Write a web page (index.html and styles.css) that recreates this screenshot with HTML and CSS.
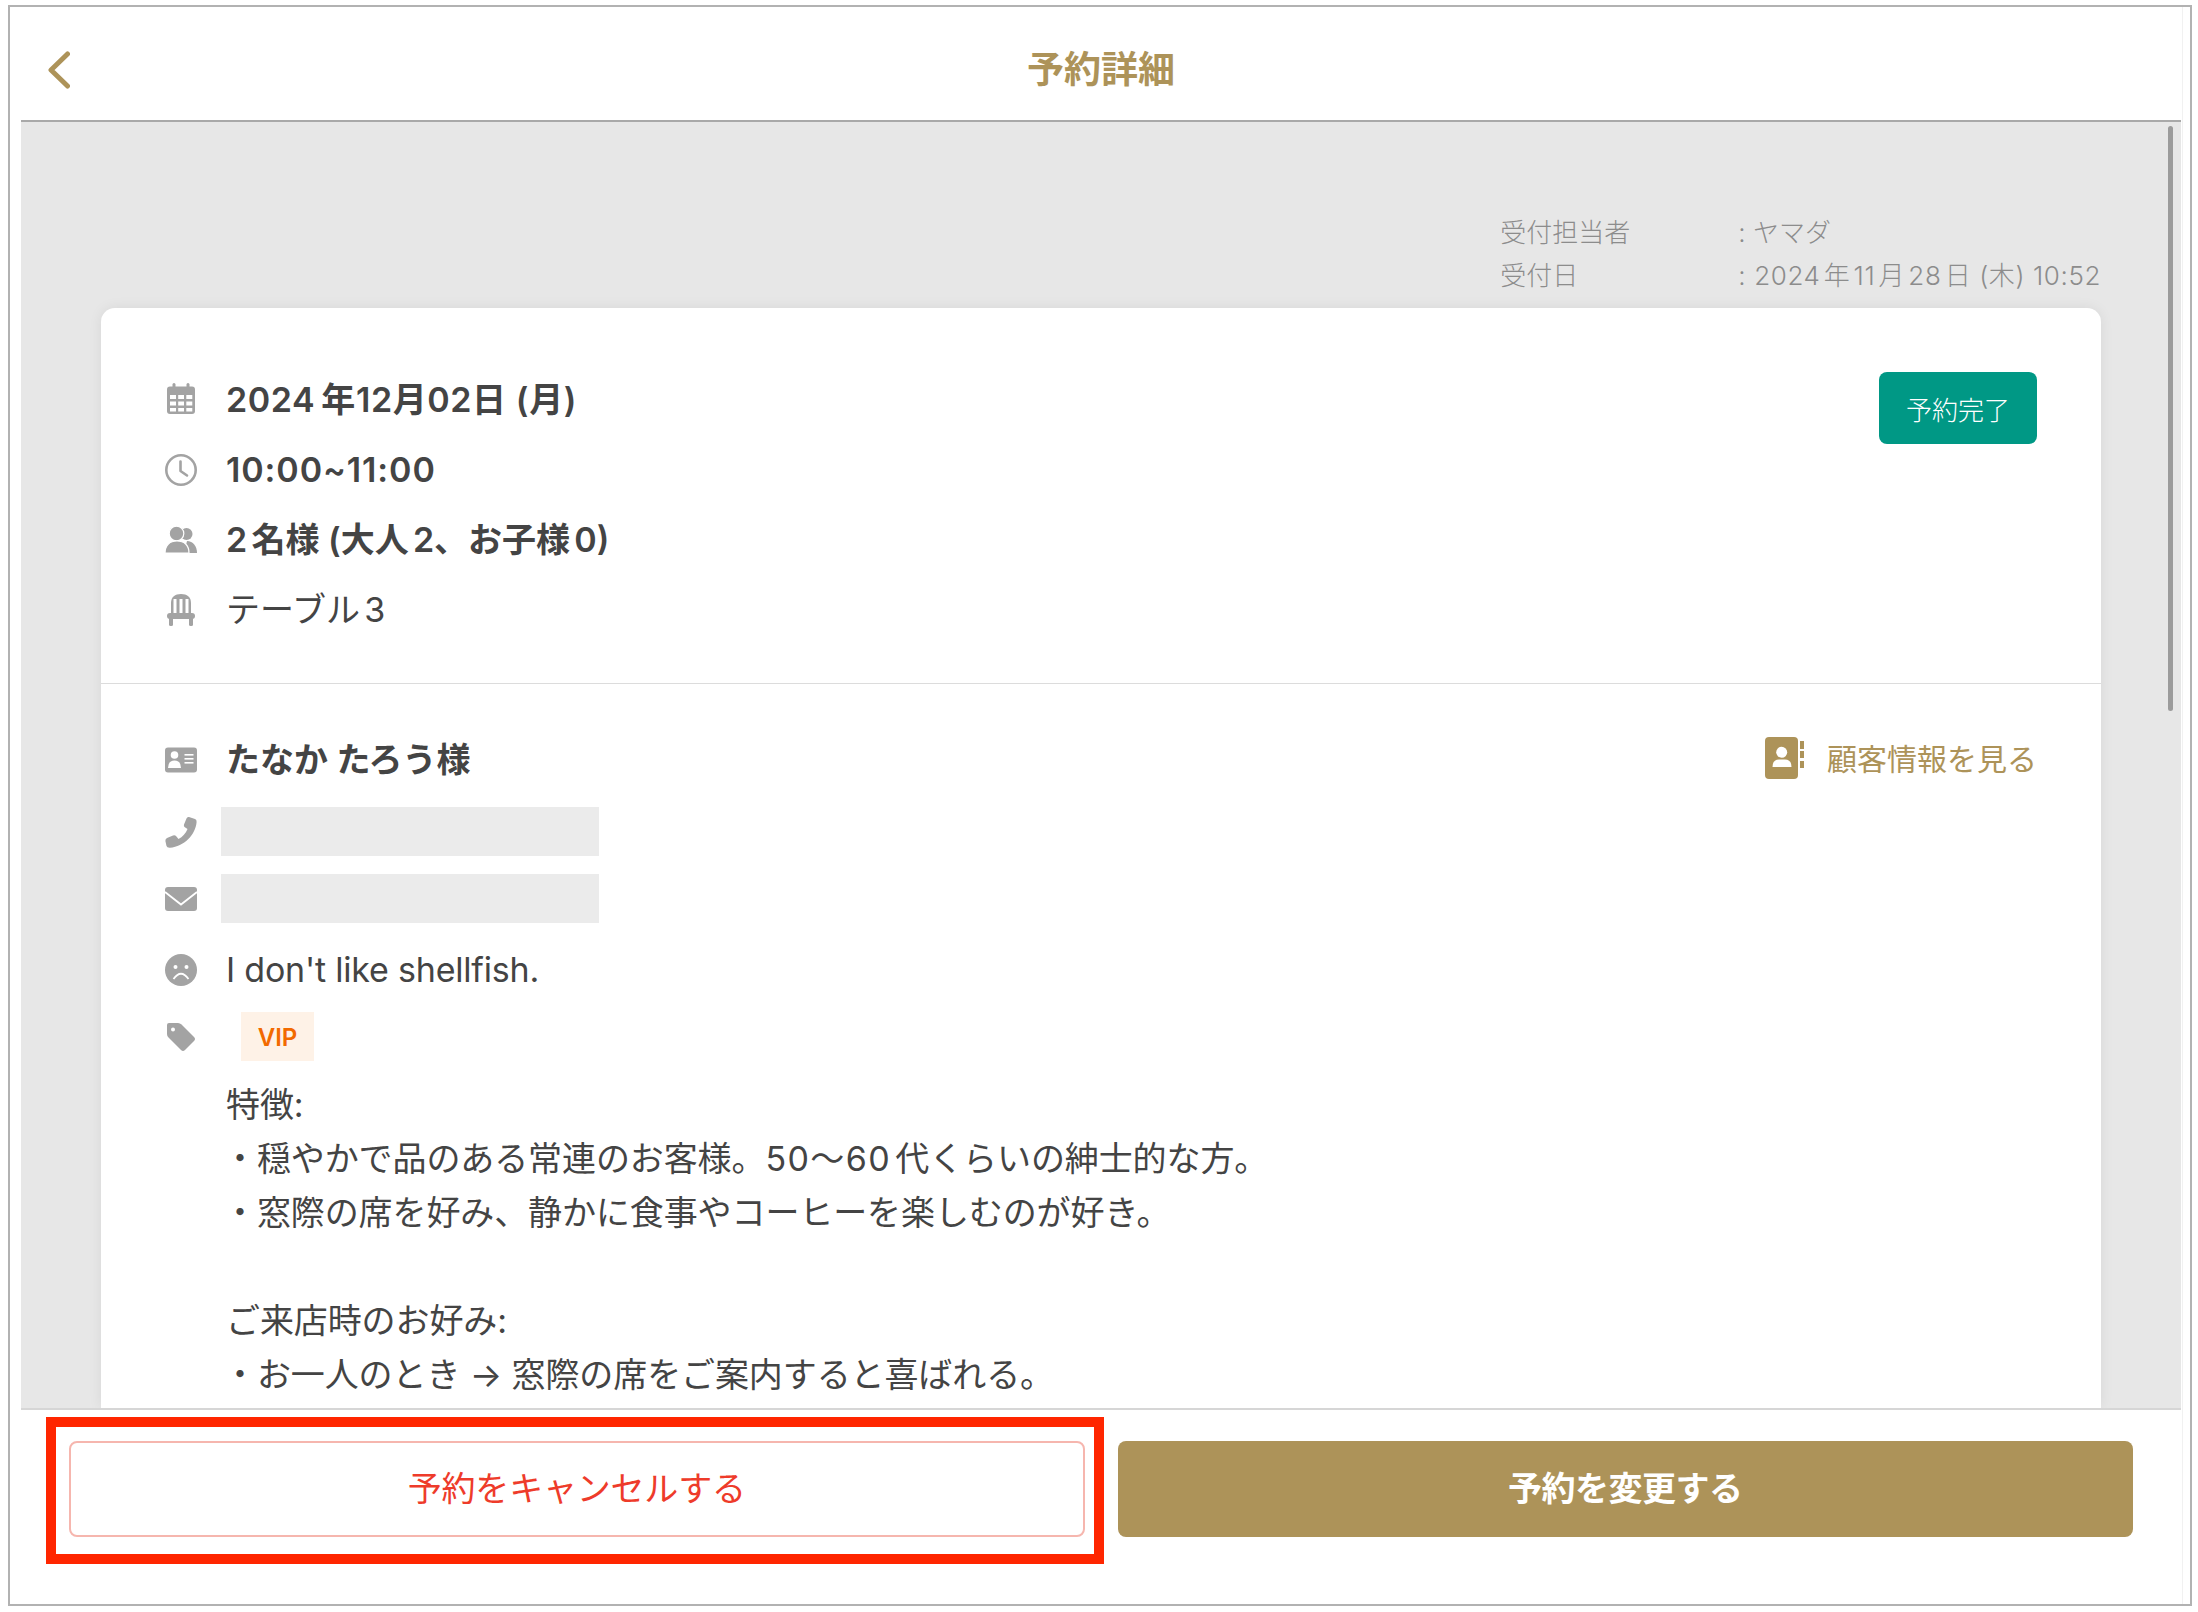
FILE: index.html
```html
<!DOCTYPE html>
<html lang="ja">
<head>
<meta charset="utf-8">
<title>予約詳細</title>
<link rel="stylesheet" href="styles.css">
</head>
<body>
<div class="frame">
  <div class="screen">
    <header class="topbar">
      <div class="topbar-side">
        <svg class="back" viewBox="0 0 22 38"><path d="M19.5 3 L3 19 L19.5 35"/></svg>
      </div>
      <h1 class="title">予約詳細</h1>
      <div class="topbar-side"></div>
    </header>
    <main class="content">
      <div class="scrollbar"></div>
      <dl class="meta">
        <dt>受付担当者</dt><dd>: ヤマダ</dd>
        <dt>受付日</dt><dd class="meta-date">: 2024年11月28日 (木) 10:52</dd>
      </dl>
      <section class="card">
        <div class="summary">
          <div class="rows">
            <div class="row strong">
              <svg class="icon" viewBox="0 0 32 32"><rect x="2" y="2.5" width="28" height="27.5" rx="3"/><rect x="7.5" y="-1" width="3" height="6" rx="1.5"/><rect x="21.5" y="-1" width="3" height="6" rx="1.5"/><g class="cut"><rect x="5" y="11" width="6" height="4"/><rect x="13.2" y="11" width="5.8" height="4"/><rect x="21.3" y="11" width="6" height="4"/><rect x="5" y="17.5" width="6" height="4"/><rect x="13.2" y="17.5" width="5.8" height="4"/><rect x="21.3" y="17.5" width="6" height="4"/><rect x="5" y="24" width="6" height="3.5"/><rect x="13.2" y="24" width="5.8" height="3.5"/><rect x="21.3" y="24" width="6" height="3.5"/></g></svg>
              <span class="date"><span class="year">2024</span>年12月02日 (月)</span>
            </div>
            <div class="row strong">
              <svg class="icon" viewBox="0 0 32 32"><circle class="line" cx="16" cy="16" r="14.7"/><path class="line" d="M15.5 7.5 V17 L22 21.5"/></svg>
              <span class="time">10:00~11:00</span>
            </div>
            <div class="row strong">
              <svg class="icon" viewBox="0 0 32 32"><circle cx="21.5" cy="10" r="6"/><path d="M32 29 C32 22 28 17 22 17 L19 29 Z"/><circle class="gap" cx="11.5" cy="9.5" r="7.3"/><path class="gap" d="M0 29 C0 21 5 17 12 17 C19 17 24 21 24 29 Z"/></svg>
              <span>2名様 (大人2、お子様0)</span>
            </div>
            <div class="row">
              <svg class="icon" viewBox="0 0 32 32"><path d="M6 21 V9 C6 3 10 0 16 0 C22 0 26 3 26 9 V21 Z"/><g class="cut"><rect x="8.5" y="5" width="3" height="16"/><rect x="14.5" y="5" width="3" height="16"/><rect x="20.5" y="5" width="3" height="16"/></g><rect x="2" y="19" width="28" height="6" rx="3"/><rect x="4" y="23" width="4" height="9" rx="1.5"/><rect x="24" y="23" width="4" height="9" rx="1.5"/></svg>
              <span>テーブル3</span>
            </div>
          </div>
          <div class="status">予約完了</div>
        </div>
        <div class="customer">
          <div class="name-row">
            <div class="row strong row-name">
              <svg class="icon" viewBox="0 0 32 32"><rect x="0" y="3.5" width="32" height="25" rx="3"/><g class="cut"><circle cx="9.5" cy="11" r="3.8"/><path d="M3 24 Q3 16.5 9.5 16.5 Q16 16.5 16 24 Z"/><rect x="19.5" y="10" width="9" height="1.6"/><rect x="19.5" y="14" width="9" height="1.6"/><rect x="19.5" y="18" width="9" height="1.6"/></g></svg>
              <span>たなか たろう様</span>
            </div>
            <a class="link">
              <svg class="book" viewBox="0 0 40 42"><rect x="0" y="0" width="33" height="42" rx="4"/><rect x="35" y="4" width="4" height="8"/><rect x="35" y="14" width="4" height="7"/><rect x="35" y="24" width="4" height="7"/><g class="cut"><circle cx="16.7" cy="15.3" r="5.5"/><path d="M7.5 30 Q7.5 22.5 14 22.5 H20 Q26.5 22.5 26.5 30 Z"/></g></svg>
              <span class="link-text">顧客情報を見る</span>
            </a>
          </div>
          <div class="row row-phone">
            <svg class="icon" viewBox="0 0 32 32"><path d="M24 1 L30 3 Q31.8 3.6 31.6 6 C30.5 19 19 30.5 5 31.8 Q2 32 1.5 30 L0.4 25 Q0.2 23 2 22 L8 19.5 Q10 19 11 20 L13.5 23 C17.5 21 21 17 22.5 13 L19.5 11 Q18.5 10 19 8.5 L21.5 2.5 Q22 .6 24 1 Z"/></svg>
            <div class="mask"></div>
          </div>
          <div class="row row-mail">
            <svg class="icon" viewBox="0 0 32 32"><rect x="0" y="4" width="32" height="24" rx="3"/><path class="cut-line" d="M0 9 L16 21.5 L32 9"/></svg>
            <div class="mask"></div>
          </div>
          <div class="row row-allergy">
            <svg class="icon" viewBox="0 0 32 32"><circle cx="16" cy="16" r="16"/><g class="cut"><circle cx="10.5" cy="13" r="2"/><circle cx="21.5" cy="13" r="2"/></g><path class="cut-line" d="M8.5 25 Q16 14.5 23.5 25"/></svg>
            <span class="allergy">I don't like shellfish.</span>
          </div>
          <div class="row row-tag">
            <svg class="icon" viewBox="0 0 32 32"><path d="M4 2 H13 Q15 2 16.5 3.5 L29 16 Q31 18 29 20 L20 29 Q18 31 16 29 L3.5 16.5 Q2 15 2 13 V4 Q2 2 4 2 Z"/><circle class="cut" cx="8" cy="8.5" r="2"/></svg>
            <div class="tag">VIP</div>
          </div>
          <div class="note">
            <p>特徴:</p>
            <p class="bullet">・穏やかで品のある常連のお客様。<span class="num">50〜60</span>代くらいの紳士的な方。</p>
            <p class="bullet">・窓際の席を好み、静かに食事やコーヒーを楽しむのが好き。</p>
            <p>&nbsp;</p>
            <p>ご来店時のお好み:</p>
            <p class="bullet">・お一人のとき → 窓際の席をご案内すると喜ばれる。</p>
          </div>
        </div>
      </section>
    </main>
    <footer class="actions">
      <button class="btn btn-cancel">予約をキャンセルする</button>
      <button class="btn btn-change">予約を変更する</button>
    </footer>
  </div>
  <div class="highlight"></div>
</div>
</body>
</html>
```

FILE: styles.css
```css
* { box-sizing: border-box; }
html, body { margin: 0; padding: 0; background: #fff; }
body {
  width: 2198px;
  height: 1612px;
  overflow: hidden;
  font-family: Inter, "Noto Sans CJK JP", sans-serif;
  color: #444;
  text-autospace: normal;
}
.frame {
  position: relative;
  width: 2184px;
  height: 1601px;
  margin: 5px 6px 6px 8px;
  border: 2px solid #b2b2b2;
  padding: 0 7px 0 11px;
  background: #fff;
}
.screen {
  height: 100%;
  display: flex;
  flex-direction: column;
  padding-right: 1px;
  border-right: 1px solid #f1f1f1;
}
.topbar {
  height: 115px;
  flex: none;
  display: grid;
  grid-template-columns: 1fr auto 1fr;
  align-items: center;
  padding-top: 13px;
  border-bottom: 2px solid #a9a9a9;
}
.topbar-side { padding-left: 27px; display: flex; }
.back { width: 22px; height: 38px; fill: none; stroke: #ad9359; stroke-width: 5; stroke-linecap: round; stroke-linejoin: round; }
.title { margin: 0; font-size: 37px; line-height: 44px; font-weight: 600; color: #ad9359; }
.content {
  position: relative;
  flex: 1;
  min-height: 0;
  overflow: hidden;
  display: flex;
  flex-direction: column;
  background: #e7e7e7;
  padding-top: 89px;
}
.scrollbar {
  position: absolute;
  left: 2147px;
  top: 4px;
  width: 5px;
  height: 585px;
  border-radius: 3px;
  background: #9b9b9b;
}
.meta {
  margin: 0;
  padding-right: 80px;
  display: grid;
  grid-template-columns: 238px auto;
  justify-content: end;
  font-size: 26px;
  line-height: 43px;
  font-weight: 300;
  color: #8c8c8c;
}
.meta dt, .meta dd { margin: 0; }
.meta-date { letter-spacing: .6px; }
.card {
  flex: 1;
  margin: 11px 80px 0 80px;
  background: #fff;
  border-radius: 14px 14px 0 0;
  box-shadow: 0 0 14px rgba(0, 0, 0, .07);
}
.summary {
  display: flex;
  justify-content: space-between;
  align-items: flex-start;
  padding: 57px 64px 38px;
  border-bottom: 1px solid #dcdcdc;
}
.row {
  display: flex;
  align-items: center;
  gap: 29px;
  height: 70px;
  font-size: 34px;
  line-height: 40px;
}
.strong { font-weight: 600; }
.date { text-autospace: no-autospace; letter-spacing: .6px; }
.year { margin-right: 6px; }
.time { letter-spacing: .9px; }
.allergy { letter-spacing: -.2px; }
.icon { width: 32px; height: 32px; flex: none; fill: #a3a3a3; overflow: visible; }
.icon .line { fill: none; stroke: #a3a3a3; stroke-width: 2.6; stroke-linecap: round; stroke-linejoin: round; }
.icon .gap { stroke: #fff; stroke-width: 1.2; }
.cut { fill: #fff; }
.cut-line { fill: none; stroke: #fff; stroke-width: 1.8; }
.status {
  width: 158px;
  height: 72px;
  margin-top: 7px;
  display: flex;
  align-items: center;
  justify-content: center;
  border-radius: 8px;
  background: #009885;
  color: #fff;
  font-size: 26px;
  font-weight: 300;
}
.customer { padding: 40px 64px 0; }
.name-row { display: flex; justify-content: space-between; align-items: center; height: 71px; }
.name-row .row { height: 71px; }
.link { display: flex; align-items: center; gap: 22px; color: #ad9359; font-size: 30px; margin-top: -3px; }
.link-text { margin-bottom: 3px; }
.book { width: 40px; height: 42px; fill: #ad9359; }
.mask { width: 378px; height: 49px; margin-left: -5px; background: #ebebeb; }
.row-phone { height: 49px; margin-top: 12px; }
.row-mail { height: 49px; margin-top: 18px; }
.row-allergy { height: 48px; margin-top: 23px; }
.row-tag { height: 49px; margin-top: 18px; }
.tag {
  width: 73px;
  height: 49px;
  margin-left: 15px;
  padding-top: 2px;
  display: flex;
  align-items: center;
  justify-content: center;
  background: #fef2e7;
  color: #f26a00;
  font-size: 24px;
  font-weight: 600;
}
.note { margin-top: 17px; padding-left: 61px; font-size: 34px; line-height: 54px; letter-spacing: -0.1px; }
.note p { margin: 0; }
.note .bullet { margin-left: -3px; }
.num { letter-spacing: 1.4px; }
.actions {
  flex: none;
  height: 196px;
  display: grid;
  grid-template-columns: 1fr 1fr;
  gap: 33px;
  padding: 31px 48px 0 48px;
  align-items: start;
  border-top: 2px solid #d6d6d6;
}
.btn {
  height: 96px;
  padding: 0 0 6px;
  border-radius: 8px;
  font: inherit;
  font-size: 34px;
  cursor: pointer;
}
.btn-cancel { background: #fff; border: 2px solid #f6b6ae; color: #ee3b2a; letter-spacing: -.2px; }
.btn-change { background: #ad9359; border: 0; color: #fff; font-weight: 600; letter-spacing: -.5px; }
.highlight {
  position: absolute;
  left: 36px;
  top: 1410px;
  width: 1058px;
  height: 147px;
  border: 10px solid #ff2600;
  pointer-events: none;
}
```
